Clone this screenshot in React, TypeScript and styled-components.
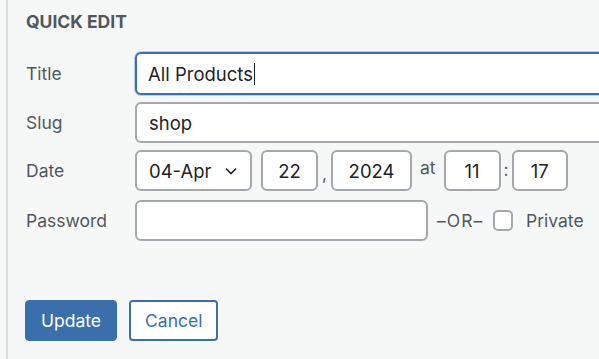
import styled, { createGlobalStyle } from "styled-components";

const GlobalStyle = createGlobalStyle`
  html, body {
    margin: 0;
    padding: 0;
    overflow: hidden;
    background: #f6f7f7;
  }
  body {
    font-family: Inter, "Liberation Sans", sans-serif;
  }
`;

function App() {
  return (
    <Page>
      <GlobalStyle />
      <Panel>
        <Heading>QUICK EDIT</Heading>
        <Rows>
          <Row>
            <Label>Title</Label>
            <Field $focused $width={520}>
              All Products
              <Caret />
            </Field>
          </Row>
          <Row>
            <Label>Slug</Label>
            <Field $width={520}>shop</Field>
          </Row>
          <Row>
            <Label>Date</Label>
            <Inline>
              <Select>
                04-Apr
                <Chevron viewBox="0 0 12 8" width="12" height="8">
                  <path d="M1 1.5l5 5 5-5" fill="none" stroke="#1d2327" strokeWidth="1.6" />
                </Chevron>
              </Select>
              <Field $width={57} $center>22</Field>
              <Sep $gap={4} $shift={3}>,</Sep>
              <Field $width={81} $center>2024</Field>
              <Sep $gap={8} $shift={-3}>at</Sep>
              <Field $width={57} $center>11</Field>
              <Sep $gap={3} $shift={-1}>:</Sep>
              <Field $width={56} $center>17</Field>
            </Inline>
          </Row>
          <Row $top={2}>
            <Label>Password</Label>
            <Inline>
              <Field $width={293} />
              <OrText>–OR–</OrText>
              <Check />
              <Label>Private</Label>
            </Inline>
          </Row>
        </Rows>
        <Actions>
          <Button $primary>Update</Button>
          <Button>Cancel</Button>
        </Actions>
      </Panel>
    </Page>
  );
}

const Page = styled.div({
  paddingLeft: 6,
  height: 359,
  width: 599,
  overflow: "hidden",
});

const Panel = styled.div({
  borderLeft: "2px solid #dcdcde",
  paddingLeft: 18,
  paddingTop: 12,
  height: "100%",
  boxSizing: "border-box",
});

const Heading = styled.div({
  fontSize: 17.5,
  lineHeight: "20px",
  fontWeight: 700,
  color: "#50575e",
});

const Rows = styled.div({
  marginTop: 20,
  display: "flex",
  flexDirection: "column",
  gap: 7,
});

const Row = styled.div<{ $top?: number }>`
  display: flex;
  align-items: center;
  margin-top: ${(p) => p.$top ?? 0}px;
`;

const Label = styled.span({
  width: 109,
  flexShrink: 0,
  fontSize: 17.5,
  color: "#50575e",
  whiteSpace: "nowrap",
});

const Inline = styled.div`
  display: flex;
  align-items: center;
  gap: 9px;

  & > ${Label} {
    width: auto;
    margin-left: 4px;
  }
`;

const Field = styled.div<{ $focused?: boolean; $width: number; $center?: boolean }>`
  box-sizing: border-box;
  flex-shrink: 0;
  width: ${(p) => p.$width}px;
  height: ${(p) => (p.$focused ? 43 : 41)}px;
  display: flex;
  align-items: center;
  justify-content: ${(p) => (p.$center ? "center" : "flex-start")};
  padding: 0 ${(p) => (p.$center ? 0 : p.$focused ? 11 : 12)}px;
  background: #fff;
  border: ${(p) => (p.$focused ? "2px solid #3a70ae" : "2px solid #a4a7ab")};
  box-shadow: ${(p) => (p.$focused ? "0 0 0 1px rgba(58, 112, 174, 0.3)" : "none")};
  border-radius: 6px;
  font-size: 18.5px;
  color: #1d2327;
`;

const Caret = styled.span({
  display: "inline-block",
  width: 1,
  height: 22,
  marginLeft: 1,
  background: "#1d2327",
});

const Select = styled.div({
  boxSizing: "border-box",
  width: 117,
  height: 41,
  display: "flex",
  alignItems: "center",
  justifyContent: "space-between",
  padding: "0 13px 0 12px",
  background: "#fff",
  border: "2px solid #a4a7ab",
  borderRadius: 6,
  fontSize: 18.5,
  color: "#1d2327",
});

const Chevron = styled.svg({
  display: "block",
});

const Sep = styled.span<{ $gap: number; $shift: number }>`
  margin: 0 ${(p) => p.$gap - 9}px;
  font-size: 17.5px;
  color: #50575e;
  position: relative;
  top: ${(p) => p.$shift}px;
`;

const OrText = styled.span({
  width: 47,
  flexShrink: 0,
  fontSize: 17.5,
  letterSpacing: 1,
  whiteSpace: "nowrap",
  color: "#50575e",
});

const Check = styled.span({
  boxSizing: "border-box",
  width: 20,
  height: 21,
  background: "#fff",
  border: "2px solid #a4a7ab",
  borderRadius: 5,
});

const Actions = styled.div({
  marginTop: 59,
  display: "flex",
  gap: 12,
  marginLeft: -1,
});

const Button = styled.button<{ $primary?: boolean }>`
  box-sizing: border-box;
  height: 41px;
  padding: 0 ${(p) => (p.$primary ? 15 : 14)}px;
  border-radius: 4px;
  font-family: Inter, "Liberation Sans", sans-serif;
  font-size: 17.5px;
  cursor: pointer;
  background: ${(p) => (p.$primary ? "#3a6fab" : "#fff")};
  color: ${(p) => (p.$primary ? "#fff" : "#3a6fab")};
  border: ${(p) => (p.$primary ? "1px solid #3a6fab" : "2px solid #3a6fab")};
`;

export default App;
